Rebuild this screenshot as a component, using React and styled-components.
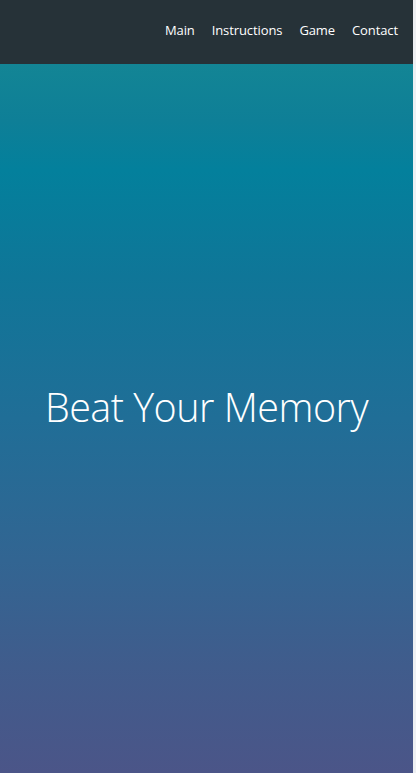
import React from "react";
import styled, { createGlobalStyle } from "styled-components";

const Global = createGlobalStyle`
  html, body { margin: 0; padding: 0; }
  body { font-family: "Open Sans", "Liberation Sans", sans-serif; background: #eef0f3; }
`;

const Page = styled.div`
  width: 413px;
  height: 773px;
  display: flex;
  flex-direction: column;
`;

const Header = styled.header`
  height: 64px;
  background: #263238;
  display: flex;
  align-items: center;
  justify-content: flex-end;
  padding-right: 15px;
  flex-shrink: 0;
`;

const Nav = styled.nav`
  display: flex;
  gap: 17px;
  margin-top: -5px;
`;

const NavLink = styled.a`
  color: #ffffff;
  font-size: 13px;
  text-decoration: none;
  letter-spacing: -0.1px;
`;

const Hero = styled.main`
  flex: 1;
  background: linear-gradient(
    to bottom,
    #138595 0%,
    #0e7f97 8%,
    #03809c 15%,
    #0f7698 30%,
    #206e97 50%,
    #326592 70%,
    #405c8c 85%,
    #4b5588 100%
  );
  display: flex;
  align-items: center;
  justify-content: center;
  padding-bottom: 24px;
`;

const Title = styled.h1`
  margin: 0;
  color: #ffffff;
  font-weight: 300;
  font-size: 39.5px;
  letter-spacing: -0.5px;
`;

export default function App() {
  return (
    <>
      <Global />
      <Page>
        <Header>
          <Nav>
            <NavLink href="#">Main</NavLink>
            <NavLink href="#">Instructions</NavLink>
            <NavLink href="#">Game</NavLink>
            <NavLink href="#">Contact</NavLink>
          </Nav>
        </Header>
        <Hero>
          <Title>Beat Your Memory</Title>
        </Hero>
      </Page>
    </>
  );
}
